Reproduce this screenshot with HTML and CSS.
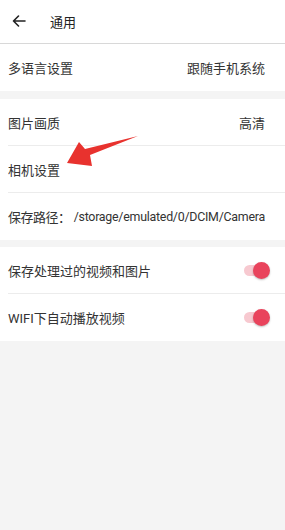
FILE: index.html
```html
<!DOCTYPE html>
<html lang="zh">
<head>
<meta charset="utf-8">
<link rel="stylesheet" href="styles.css">
</head>
<body>
<div class="page">
  <header class="topbar">
    <svg class="back" width="14" height="12" viewBox="0 0 14 12"><path d="M13 6H1.5M6.5 1L1.5 6l5 5" fill="none" stroke="#222" stroke-width="1.6" stroke-linecap="round" stroke-linejoin="round"/></svg>
    <span class="title">通用</span>
  </header>

  <section class="group">
    <div class="row"><span>多语言设置</span><span class="value">跟随手机系统</span></div>
  </section>

  <section class="group">
    <div class="row line"><span>图片画质</span><span class="value">高清</span></div>
    <div class="row line"><span>相机设置</span></div>
    <div class="row"><span class="path-label">保存路径：</span><span class="path">/storage/emulated/0/DCIM/Camera</span></div>
  </section>

  <section class="group">
    <div class="row line"><span>保存处理过的视频和图片</span><span class="toggle"><i></i></span></div>
    <div class="row"><span>WIFI下自动播放视频</span><span class="toggle"><i></i></span></div>
  </section>

  <svg class="arrow" width="285" height="200" viewBox="0 0 285 200">
    <path d="M138 136 L90 155 L92 166 L67 163 L79 142 L85 149 Z" fill="#e8322e"/>
  </svg>
</div>
</body>
</html>
```
FILE: styles.css
```css
* { box-sizing: border-box; margin: 0; padding: 0; }
html, body { background: #f4f4f4; }
body {
  margin: 0;
  font-family: Roboto, "Noto Sans CJK SC", sans-serif;
  color: #333;
  font-size: 13px;
}
.page { position: relative; width: 285px; height: 530px; }
.topbar {
  height: 44px;
  background: #fff;
  display: flex;
  align-items: center;
  padding-left: 12px;
  border-bottom: 1px solid #d8d8d8;
  box-shadow: 0 1px 2px rgba(0,0,0,0.08);
}
.back { margin-top: -2px; }
.title { margin-left: 24px; margin-top: -1px; font-size: 13px; color: #222; }
.group { background: #fff; margin-bottom: 7px; padding-left: 8px; }
.group:first-of-type { margin-bottom: 8px; }
.row {
  height: 47px;
  display: flex;
  align-items: center;
  justify-content: space-between;
  padding-right: 20px;
  white-space: nowrap;
}
.row.line { border-bottom: 1px solid #ececec; }
.value { color: #333; }
.path-label { flex: none; width: 64px; letter-spacing: -0.5px; }
.path { flex: 1; min-width: 0; text-align: right; font-size: 12.4px; letter-spacing: -0.25px; }
.toggle {
  position: relative;
  width: 24px;
  height: 11px;
  border-radius: 6px;
  background: #f7c9d0;
  margin-right: -3px;
}
.toggle i {
  position: absolute;
  right: -2px;
  top: -3px;
  width: 17px;
  height: 17px;
  border-radius: 50%;
  background: #e9435c;
  box-shadow: 0 1px 2px rgba(0,0,0,0.25);
}
.arrow { position: absolute; left: 0; top: 0; pointer-events: none; }
```
